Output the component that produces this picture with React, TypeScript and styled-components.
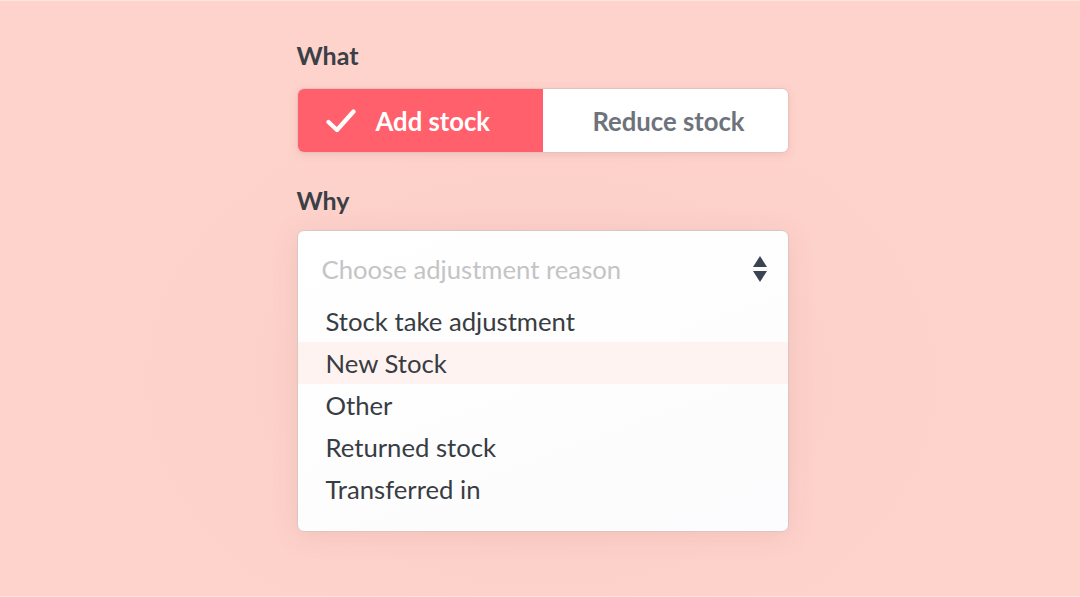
import React from "react";
import styled, { createGlobalStyle } from "styled-components";

const Global = createGlobalStyle`
  html, body { margin: 0; padding: 0; }
  body {
    width: 1080px;
    height: 597px;
    overflow: hidden;
    font-family: Lato, "Open Sans", sans-serif;
    background: #fed3cc;
  }
`;

const Page = styled.div`
  width: 1080px;
  height: 597px;
  box-sizing: border-box;
  border-top: 1px solid #fde6e0;
  border-bottom: 1px solid #fde6e0;
  background: radial-gradient(ellipse 420px 300px at 542px 380px, #f9cbc4 0%, #fcd1ca 60%, #fed3cc 100%);
  display: flex;
  justify-content: center;
`;

const Column = styled.div`
  width: 492px;
  margin-left: 5px;
  padding-top: 39px;
  display: flex;
  flex-direction: column;
`;

const Label = styled.div<{ $gap: number }>`
  font-size: 25px;
  font-weight: 700;
  color: #3b3f46;
  line-height: 30px;
  margin-bottom: ${(p) => p.$gap}px;
`;

const Toggle = styled.div`
  display: grid;
  grid-template-columns: 245px 1fr;
  height: 65px;
  border-radius: 7px;
  overflow: hidden;
  border: 1px solid #e3c3be;
  box-sizing: border-box;
  box-shadow: 0 2px 8px rgba(190, 110, 100, 0.18);
  margin-bottom: 32px;
`;

const Option = styled.div<{ $active?: boolean }>`
  display: flex;
  align-items: center;
  justify-content: ${(p) => (p.$active ? "flex-start" : "center")};
  gap: 20px;
  font-size: 25.7px;
  font-weight: 700;
  background: ${(p) => (p.$active ? "#ff606b" : "#ffffff")};
  color: ${(p) => (p.$active ? "#ffffff" : "#6e737b")};
  padding-left: ${(p) => (p.$active ? "28px" : "7px")};
`;

const Select = styled.div`
  height: 302px;
  box-sizing: border-box;
  border: 1px solid #dcc6c3;
  border-radius: 7px;
  background: linear-gradient(160deg, #ffffff 0%, #fefdfd 60%, #fcfbfd 100%);
  box-shadow: 0 4px 24px rgba(200, 120, 110, 0.18);
  display: flex;
  flex-direction: column;
  overflow: hidden;
`;

const Head = styled.div`
  height: 69px;
  display: flex;
  align-items: center;
  justify-content: space-between;
  padding: 6px 20px 0 24px;
  box-sizing: border-box;
`;

const Placeholder = styled.span`
  font-size: 25.7px;
  color: #c4c4c6;
`;

const List = styled.div`
  display: flex;
  flex-direction: column;
`;

const Item = styled.div<{ $hover?: boolean }>`
  height: 42px;
  display: flex;
  align-items: center;
  padding-left: 28px;
  font-size: 25.7px;
  color: #383c43;
  background: ${(p) => (p.$hover ? "#fff3f1" : "transparent")};
`;

const Check = () => (
  <svg width="30" height="26" viewBox="0 0 30 26">
    <path d="M2.5 14 L11 22 L27.5 3.5" fill="none" stroke="#fff" strokeWidth="4.2" strokeLinecap="round" strokeLinejoin="round" />
  </svg>
);

const Arrows = () => (
  <svg width="16" height="28" viewBox="0 0 16 28">
    <path d="M8 1 L15 12 L1 12 Z" fill="#3a4450" />
    <path d="M1 16 L15 16 L8 27 Z" fill="#3a4450" />
  </svg>
);

const items = ["Stock take adjustment", "New Stock", "Other", "Returned stock", "Transferred in"];

export default function App() {
  return (
    <>
      <Global />
      <Page>
        <Column>
          <Label $gap={18}>What</Label>
          <Toggle>
            <Option $active>
              <Check />
              <span>Add stock</span>
            </Option>
            <Option>Reduce stock</Option>
          </Toggle>
          <Label $gap={15}>Why</Label>
          <Select>
            <Head>
              <Placeholder>Choose adjustment reason</Placeholder>
              <Arrows />
            </Head>
            <List>
              {items.map((it) => (
                <Item key={it} $hover={it === "New Stock"}>
                  {it}
                </Item>
              ))}
            </List>
          </Select>
        </Column>
      </Page>
    </>
  );
}
